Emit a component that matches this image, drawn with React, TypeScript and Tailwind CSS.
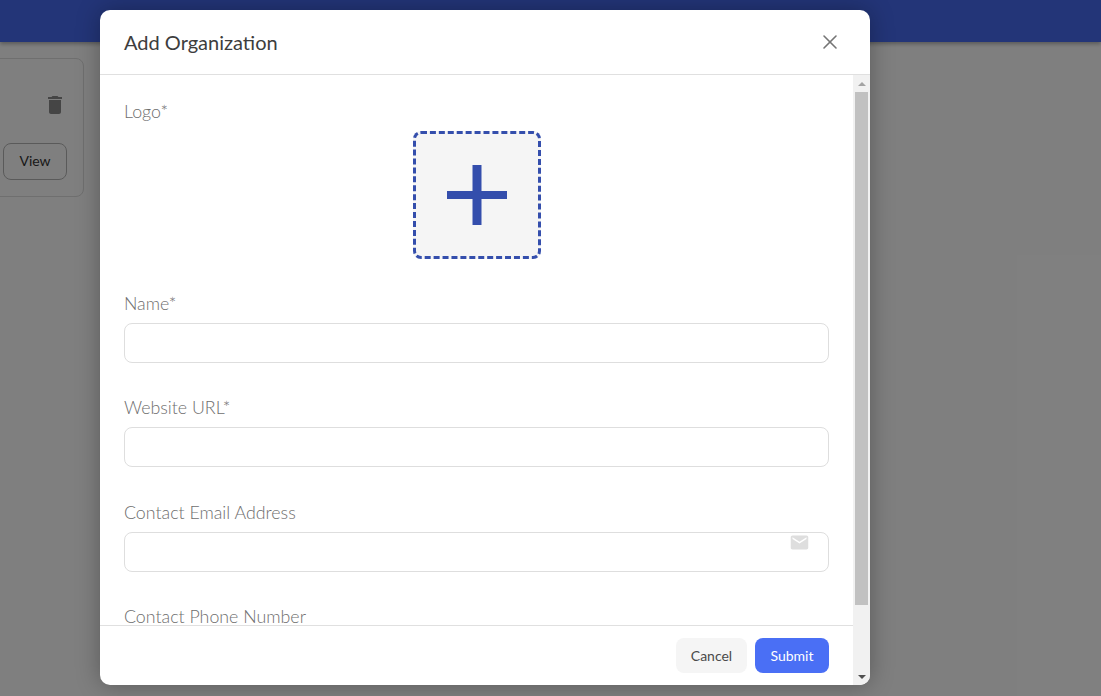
import { X } from "lucide-react"

function Field({ label, icon }: { label: string; icon?: boolean }) {
  return (
    <div className="mb-[32.4px]">
      <label className="block h-[26px] text-[17.8px] font-light leading-[24px] text-[#6e6e6e]">{label}</label>
      <div className="relative mt-[6px] h-[40px] rounded-[8px] border border-[#dedede] bg-white">
        {icon && (
          <svg className="absolute right-[18px] top-[-1px] h-[21px] w-[21px]" viewBox="0 0 24 24" fill="#dedede">
            <path d="M20 4H4c-1.1 0-2 .9-2 2v12c0 1.100.9 2 2 2h16c1.100 0 2-.9 2-2V6c0-1.100-.9-2-2-2zm0 4-8 5-8-5V6l8 5 8-5v2z" />
          </svg>
        )}
      </div>
    </div>
  )
}

export default function App() {
  return (
    <div className="relative h-[696px] w-[1101px] overflow-hidden bg-white font-['Lato','Liberation_Sans',sans-serif]">
      {/* page behind the dialog */}
      <div className="h-[42px] bg-[#466af0] shadow-[0_2px_4px_rgba(0,0,0,0.3)]" />
      <div className="ml-[-40px] mt-[16px] flex h-[139px] w-[124px] flex-col items-end rounded-[8px] border border-[#dedede] pr-[16px]">
        <svg className="mt-[34px] h-[24px] w-[24px]" viewBox="0 0 24 24" fill="#8a8a8a">
          <path d="M6 19c0 1.100.9 2 2 2h8c1.100 0 2-.9 2-2V7H6v12zM19 4h-3.500l-1-1h-5l-1 1H5v2h14V4z" />
        </svg>
        <button className="mt-[26px] h-[37px] w-[64px] rounded-[8px] border border-[#b5b5b5] pb-[2px] text-[14px] text-[#333]">View</button>
      </div>

      {/* overlay */}
      <div className="absolute inset-0 bg-black/50" />

      {/* dialog */}
      <div className="absolute left-[100px] top-[10px] flex h-[675px] w-[770px] flex-col overflow-hidden rounded-[10px] bg-white shadow-[0_0_24px_rgba(0,0,0,0.3)]">
        <div className="flex h-[65px] shrink-0 items-center justify-between border-b border-[#e0e0e0] pl-[24px] pr-[28px]">
          <h2 className="text-[20px] text-[#3d3d3d]">Add Organization</h2>
          <X className="h-[24px] w-[24px] text-[#757575]" strokeWidth={1.6} />
        </div>
        <div className="flex min-h-0 flex-1">
          <div className="flex min-w-0 flex-1 flex-col">
            <div className="min-h-0 flex-1 overflow-hidden px-[24px] pt-[24px]">
              <label className="block h-[26px] text-[17.8px] font-light leading-[24px] text-[#6e6e6e]">Logo*</label>
              <div className="mb-[32px] mt-[6px] flex justify-center">
                <div className="flex h-[128px] w-[128px] items-center justify-center rounded-[8px] border-[3px] border-dashed border-[#344eac] bg-[#f5f5f5]">
                  <svg className="h-[60px] w-[60px]" viewBox="0 0 60 60" fill="#344eac">
                    <path d="M25.500 0h9v26h25.500v8H34.500v26h-9V34H0v-8h25.500z" />
                  </svg>
                </div>
              </div>
              <Field label="Name*" />
              <Field label="Website URL*" />
              <Field label="Contact Email Address" icon />
              <Field label="Contact Phone Number" />
            </div>
            <div className="flex h-[60px] shrink-0 items-center justify-end gap-[8px] border-t border-[#e0e0e0] pr-[24px]">
              <button className="h-[35px] w-[71px] rounded-[8px] bg-[#f5f5f5] text-[14px] text-[#4a4a4a]">Cancel</button>
              <button className="h-[35px] w-[74px] rounded-[8px] bg-[#4a6ff5] text-[14px] text-white">Submit</button>
            </div>
          </div>
          {/* scrollbar */}
          <div className="flex w-[17px] shrink-0 flex-col items-center bg-[#f1f1f1]">
            <div className="flex h-[17px] w-full items-center justify-center">
              <div className="h-0 w-0 border-x-[4px] border-b-[4px] border-x-transparent border-b-[#a3a3a3]" />
            </div>
            <div className="h-[513px] w-[13px] bg-[#c1c1c1]" />
            <div className="flex-1" />
            <div className="flex h-[17px] w-full items-center justify-center">
              <div className="h-0 w-0 border-x-[4px] border-t-[4px] border-x-transparent border-t-[#505050]" />
            </div>
          </div>
        </div>
      </div>
    </div>
  )
}
